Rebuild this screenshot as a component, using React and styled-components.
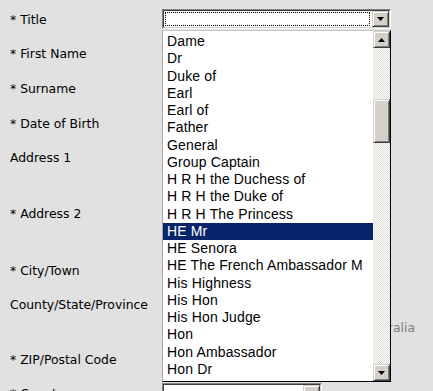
import React from 'react'
import styled, { createGlobalStyle } from 'styled-components'

const GlobalStyle = createGlobalStyle`
  html, body {
    margin: 0;
    padding: 0;
    background: #e1e1e1;
    overflow: hidden;
  }
`

const Page = styled.div`
  width: 433px;
  height: 391px;
  overflow: hidden;
  box-sizing: border-box;
  padding-top: 9px;
  background: #e1e1e1;
  font-family: "DejaVu Sans", Verdana, sans-serif;
  font-size: 12.4px;
  color: #000;
`

const Row = styled.div`
  display: flex;
  align-items: flex-start;
  height: ${(p) => p.$h}px;
`

const Label = styled.div`
  width: 152px;
  padding-left: 10px;
  padding-top: 4px;
  line-height: 14px;
  white-space: nowrap;
`

const Field = styled.div`
  position: relative;
  flex: 1;
`

const Combo = styled.div`
  width: ${(p) => p.$w}px;
  height: 20px;
  box-sizing: border-box;
  border: 1px solid;
  border-color: #808080 #fff #fff #808080;
`

const ComboInner = styled.div`
  display: flex;
  height: 100%;
  box-sizing: border-box;
  background: #fff;
  border: 1px solid;
  border-color: #404040 #d4d0c8 #d4d0c8 #404040;
`

const ComboText = styled.div`
  flex: 1;
  margin: 1px 2px 1px 1px;
  border: 1px dotted ${(p) => (p.$focus ? '#000' : 'transparent')};
`

const Button = styled.div`
  display: flex;
  align-items: center;
  justify-content: center;
  width: 17px;
  height: ${(p) => p.$h || 17}px;
  box-sizing: border-box;
  flex-shrink: 0;
  background: #d4d0c8;
  border: 1px solid;
  border-color: #d4d0c8 #404040 #404040 #d4d0c8;
  box-shadow: inset 1px 1px 0 #fff, inset -1px -1px 0 #808080;
`

const TextInput = styled.div`
  width: ${(p) => p.$w}px;
  height: 20px;
  box-sizing: border-box;
  background: #fff;
  border: 2px inset #d4d0c8;
`

const Hint = styled.div`
  width: 253px;
  margin-top: 7px;
  text-align: right;
  color: #7c7c7c;
  line-height: 14px;
  white-space: nowrap;
`

const DropList = styled.div`
  position: absolute;
  top: 21px;
  left: 0;
  width: 229px;
  height: 352px;
  box-sizing: border-box;
  display: flex;
  background: #fff;
  border-top: 1px solid #c8c8c8;
  border-left: 1px solid #a8a8a8;
  border-right: 1px solid #000;
  border-bottom: 1px solid #000;
  z-index: 2;
`

const Options = styled.div`
  flex: 1;
  padding-top: 2px;
  overflow: hidden;
  font-family: "Liberation Sans", Arial, sans-serif;
  font-size: 14px;
  letter-spacing: 0.15px;
`

const Option = styled.div`
  height: 17.25px;
  line-height: 17.25px;
  padding-left: 4px;
  white-space: nowrap;
  background: ${(p) => (p.$selected ? '#0a246a' : 'transparent')};
  color: ${(p) => (p.$selected ? '#fff' : '#000')};
`

const ScrollBar = styled.div`
  display: flex;
  flex-direction: column;
  width: 17px;
`

const Track = styled.div`
  flex: 1;
  background-color: #fff;
  background-image: conic-gradient(#dcd9d2 25%, transparent 0 50%, #dcd9d2 0 75%, transparent 0);
  background-size: 2px 2px;
`

const Thumb = styled(Button)`
  margin-top: ${(p) => p.$offset}px;
`

const Arrow = ({ up }) => (
  <svg width="7" height="4" viewBox="0 0 7 4">
    <polygon points={up ? '0,4 7,4 3.5,0' : '0,0 7,0 3.5,4'} fill="#000" />
  </svg>
)

const titles = [
  'Dame', 'Dr', 'Duke of', 'Earl', 'Earl of', 'Father', 'General', 'Group Captain',
  'H R H the Duchess of', 'H R H the Duke of', 'H R H The Princess', 'HE Mr',
  'HE Senora', 'HE The French Ambassador M', 'His Highness', 'His Hon',
  'His Hon Judge', 'Hon', 'Hon Ambassador', 'Hon Dr',
]

const rows = [
  { label: '* First Name', h: 35 },
  { label: '* Surname', h: 35 },
  { label: '* Date of Birth', h: 34 },
  { label: 'Address 1', h: 56 },
  { label: '* Address 2', h: 57 },
  { label: '* City/Town', h: 34 },
]

const App = () => {
  return (
    <Page>
      <GlobalStyle />
      <Row $h={34}>
        <Label>* Title</Label>
        <Field>
          <Combo $w={229}>
            <ComboInner>
              <ComboText $focus />
              <Button $h={16}><Arrow /></Button>
            </ComboInner>
          </Combo>
          <DropList>
            <Options>
              {titles.map((t) => (
                <Option key={t} $selected={t === 'HE Mr'}>{t}</Option>
              ))}
            </Options>
            <ScrollBar>
              <Button><Arrow up /></Button>
              <Track>
                <Thumb $h={44} $offset={51} />
              </Track>
              <Button><Arrow /></Button>
            </ScrollBar>
          </DropList>
        </Field>
      </Row>
      {rows.map((r) => (
        <Row key={r.label} $h={r.h}>
          <Label>{r.label}</Label>
          <Field>
            <TextInput $w={180} />
          </Field>
        </Row>
      ))}
      <Row $h={55}>
        <Label>County/State/Province</Label>
        <Field>
          <TextInput $w={180} />
          <Hint>Australia</Hint>
        </Field>
      </Row>
      <Row $h={34}>
        <Label>* ZIP/Postal Code</Label>
        <Field>
          <TextInput $w={120} />
        </Field>
      </Row>
      <Row $h={40}>
        <Label>* Country</Label>
        <Field>
          <Combo $w={160}>
            <ComboInner>
              <ComboText />
              <Button $h={16}><Arrow /></Button>
            </ComboInner>
          </Combo>
        </Field>
      </Row>
    </Page>
  )
}

export default App
